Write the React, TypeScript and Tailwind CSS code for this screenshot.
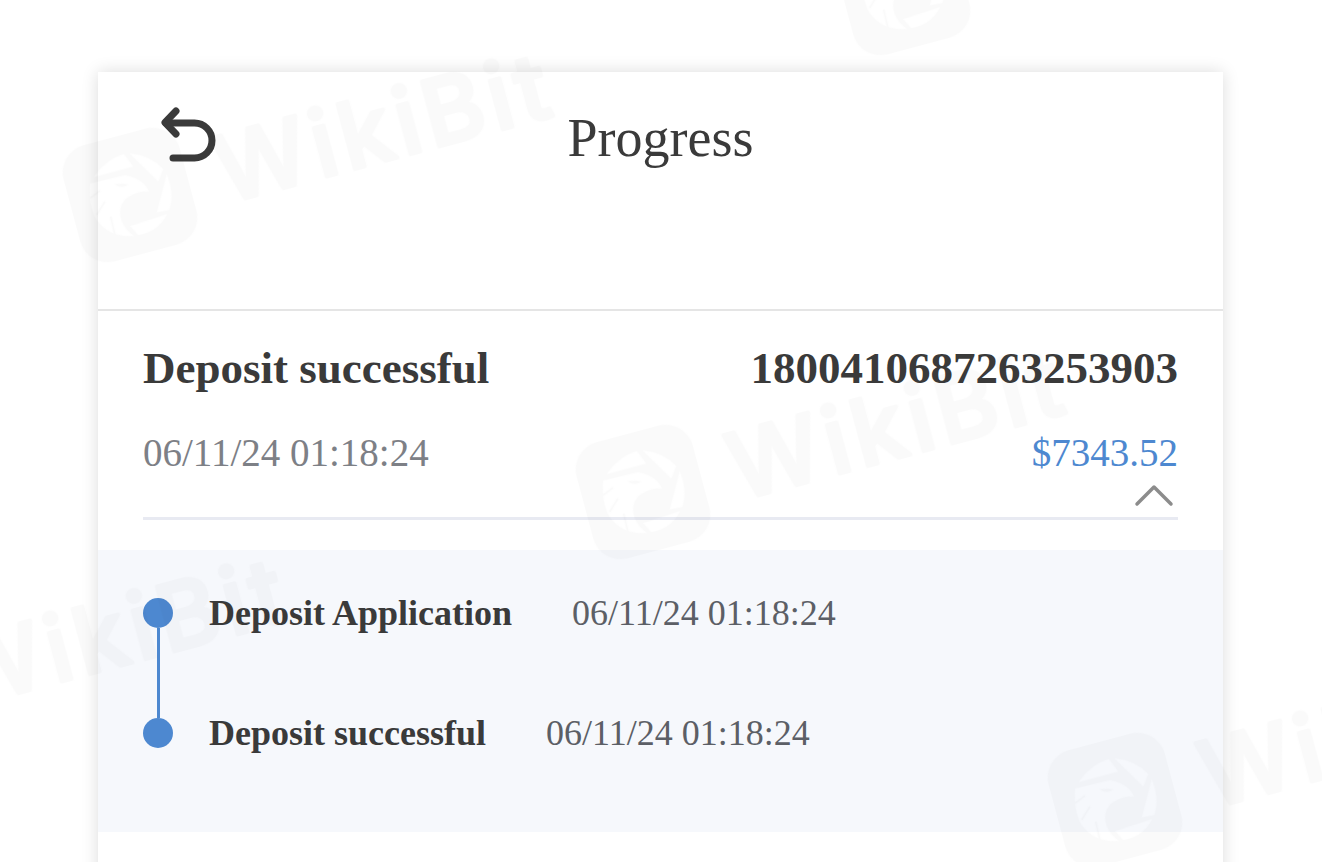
import React from 'react';

const SERIF = "font-['Liberation_Serif',serif]";

const marks = [
  { x: 130, y: 195 },
  { x: 643, y: 492 },
  { x: 1115, y: 800 },
  { x: 903, y: -12 },
  { x: -135, y: 700 },
];

// WikiBit tiles sit on top of the page as a very faint stamp
function Watermark() {
  return (
    <svg className="absolute inset-0 pointer-events-none" width="1322" height="862">
      <defs>
        <mask id="eagle" maskUnits="userSpaceOnUse" x="-80" y="-80" width="160" height="160">
          <rect x="-80" y="-80" width="160" height="160" fill="white" />
          <g transform="rotate(15) scale(0.3333) translate(-250 -275)">
            <path d="M140 222 Q180 165 232 152 L260 190 Z" fill="black" />
            <path d="M248 150 Q310 155 350 197 L335 235 Z" fill="black" />
            <path d="M360 212 Q385 270 368 320 L330 328 Z" fill="black" />
            <path d="M130 240 L235 215 Q290 225 308 265 Q270 262 240 285 Q212 310 225 352 Q235 378 262 398 Q190 405 150 350 Q125 310 130 240 Z" fill="black" />
            <path d="M250 368 L362 332 Q335 385 275 396 Z" fill="black" />
            <path d="M205 243 Q225 240 245 243 Q225 258 205 243 Z" fill="white" />
            <path d="M130 285 L160 262 M150 335 L175 295 M192 340 L205 395" fill="none" stroke="white" strokeWidth="5" />
            <path d="M240 295 Q262 278 295 283" fill="none" stroke="white" strokeWidth="4" />
          </g>
        </mask>
      </defs>
      {marks.map((m, i) => (
        <g key={i} transform={`translate(${m.x} ${m.y}) rotate(-15)`} opacity="0.022">
          <rect x="-60" y="-60" width="120" height="120" rx="28" fill="#000" mask="url(#eagle)" />
          <text
            x="90"
            y="33"
            fontFamily="Inter, sans-serif"
            fontWeight="500"
            fontSize="92"
            letterSpacing="6"
            fill="#000"
            stroke="#000"
            strokeWidth="4"
            strokeLinejoin="round"
          >
            WikiBit
          </text>
        </g>
      ))}
    </svg>
  );
}

function BackIcon() {
  return (
    <svg width="58" height="58" viewBox="160 106 58 58" fill="none" stroke="#3a3a3a" strokeWidth="7" strokeLinecap="round" strokeLinejoin="round">
      <path d="M176 111 L165 122.5 L176 134" />
      <path d="M166 123 H194.5 A17.5 17.5 0 0 1 194.5 158 H173" />
    </svg>
  );
}

function ChevronUp() {
  return (
    <svg width="40" height="24" viewBox="0 0 40 24" fill="none" stroke="#8c8c8c" strokeWidth="3.5" strokeLinecap="round" strokeLinejoin="round">
      <path d="M3 20 L20 3 L37 20" />
    </svg>
  );
}

const steps = [
  { label: 'Deposit Application', time: '06/11/24 01:18:24' },
  { label: 'Deposit successful', time: '06/11/24 01:18:24' },
];

export default function App() {
  return (
    <div className={`relative h-[862px] overflow-hidden bg-white pt-[72px] pl-[98px] ${SERIF}`}>
      <div className="w-[1125px] h-[900px] bg-white shadow-[0_0_16px_rgba(0,0,0,0.14)]">
        <header className="h-[239px] border-b-2 border-[#e5e5e5] grid grid-cols-[1fr_auto_1fr] items-start">
          <div className="pl-[62px] pt-[34px]">
            <BackIcon />
          </div>
          <h1 className="pt-[35px] text-[54px] leading-[62px] text-[#3a3a3a]">Progress</h1>
        </header>

        <section className="px-[45px] pt-[31px]">
          <div className="flex justify-between text-[45px] leading-[52px] font-bold text-[#3a3a3a]">
            <span>Deposit successful</span>
            <span>1800410687263253903</span>
          </div>
          <div className="mt-[36px] flex justify-between text-[39px] leading-[45px]">
            <span className="text-[#7d8086]">06/11/24 01:18:24</span>
            <span className="text-[#4d88d0]">$7343.52</span>
          </div>
          <div className="flex justify-end pr-[4px] h-[42px] pt-[9px]">
            <ChevronUp />
          </div>
          <div className="h-[3px] bg-[#e8eaf2]"></div>
        </section>

        <section className="mt-[30px] h-[282px] bg-[#f6f8fc] px-[45px] pt-[48px]">
          <div className="flex flex-col gap-[90px]">
            {steps.map((s, i) => (
              <div key={i} className="relative flex items-center h-[30px]">
                <span className="w-[30px] h-[30px] rounded-full bg-[#4d88d0] shrink-0"></span>
                {i === 0 && <span className="absolute left-[14px] top-[30px] w-[3px] h-[90px] bg-[#4d88d0]"></span>}
                <span className="ml-[36px] text-[36px] leading-[42px] font-bold text-[#3a3a3a]">{s.label}</span>
                <span className="ml-[60px] text-[36px] leading-[42px] text-[#5c5f66]">{s.time}</span>
              </div>
            ))}
          </div>
        </section>
      </div>
      <Watermark />
    </div>
  );
}
